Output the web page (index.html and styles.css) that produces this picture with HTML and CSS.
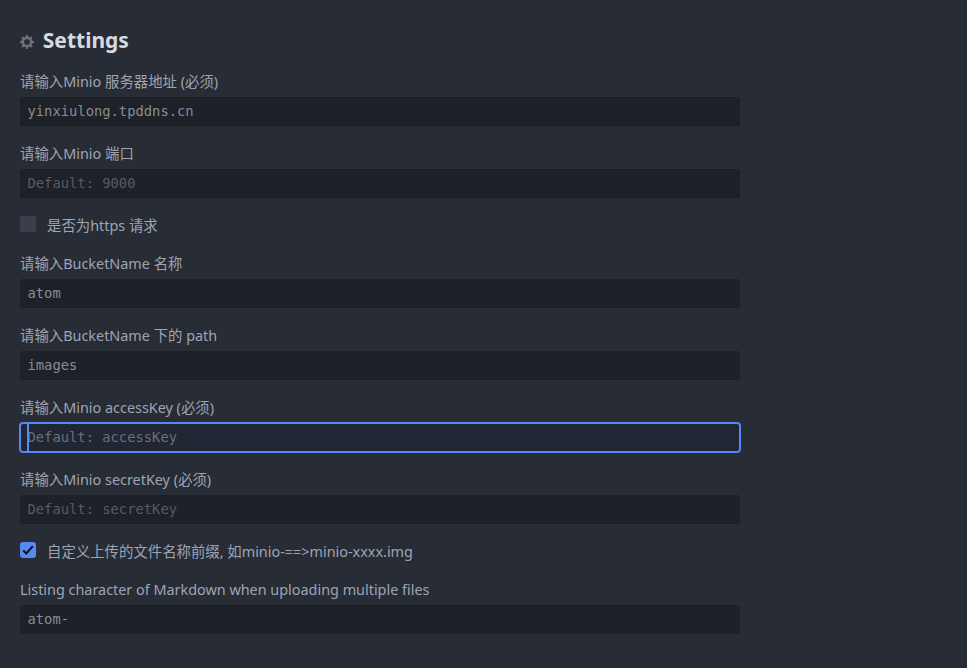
FILE: index.html
```html
<!DOCTYPE html>
<html lang="zh-CN">
<head>
<meta charset="utf-8">
<title>Settings</title>
<link rel="stylesheet" href="styles.css">
</head>
<body>
<main class="panel">
  <h1 class="heading">
    <svg class="gear" viewBox="0 0 14 16" aria-hidden="true"><path fill-rule="evenodd" d="M14 8.77v-1.6l-1.94-.64-.45-1.09.88-1.84-1.13-1.13-1.81.91-1.09-.45-.69-1.92h-1.6l-.63 1.94-1.11.45-1.84-.88-1.13 1.13.91 1.81-.45 1.09L0 7.23v1.59l1.94.64.45 1.09-.88 1.84 1.13 1.13 1.81-.91 1.09.45.69 1.92h1.59l.63-1.94 1.11-.45 1.84.88 1.13-1.13-.92-1.81.47-1.09L14 8.75v.02zM7 11c-1.66 0-3-1.34-3-3s1.34-3 3-3 3 1.34 3 3-1.34 3-3 3z"/></svg>
    <span>Settings</span>
  </h1>
  <div class="group"><div class="label">请输入Minio 服务器地址 (必须)</div><div class="field">yinxiulong.tpddns.cn</div></div>
  <div class="group"><div class="label">请输入Minio 端口</div><div class="field placeholder">Default: 9000</div></div>
  <div class="check"><span class="box"></span><span>是否为https 请求</span></div>
  <div class="group"><div class="label">请输入BucketName 名称</div><div class="field">atom</div></div>
  <div class="group"><div class="label">请输入BucketName 下的 path</div><div class="field">images</div></div>
  <div class="group"><div class="label">请输入Minio accessKey (必须)</div><div class="field placeholder focused">Default: accessKey</div></div>
  <div class="group"><div class="label">请输入Minio secretKey (必须)</div><div class="field placeholder">Default: secretKey</div></div>
  <div class="check"><span class="box checked"><svg viewBox="0 0 16 16" aria-hidden="true"><path d="M3.3 8.5 6.3 11.5 12.8 4.2"/></svg></span><span>自定义上传的文件名称前缀, 如minio-==&gt;minio-xxxx.img</span></div>
  <div class="group"><div class="label">Listing character of Markdown when uploading multiple files</div><div class="field">atom-</div></div>
</main>
</body>
</html>
```
FILE: styles.css
```css
* { box-sizing: border-box; }
body {
  margin: 0;
  background: #282c34;
  color: #9da5b4;
  font: 14.4px/19px "Noto Sans", "Noto Sans CJK SC", sans-serif;
}
.panel {
  height: 668px;
  padding: 26px 20px 0;
  border-bottom: 1px solid #24272f;
  overflow: hidden;
}
.heading {
  display: flex;
  align-items: center;
  height: 28px;
  margin: 0 0 18px;
  color: #d7dae0;
  font-size: 21px;
  font-weight: 700;
  line-height: 28px;
}
.gear {
  width: 14px;
  height: 16px;
  margin: 4px 8.8px 0 0;
  fill: #6b717d;
}
.group {
  width: 720px;
  margin-bottom: 18px;
}
.label {
  height: 25px;
  white-space: nowrap;
}
.field {
  position: relative;
  height: 29px;
  padding: 0 6.5px;
  border: 1px solid #1b1e25;
  border-radius: 3px;
  background: #1e2128;
  color: #888c95;
  font: 13.8px/27px "DejaVu Sans Mono", monospace;
}
.placeholder { color: #575b64; }
.focused {
  border-color: #568af2;
  background: #202633;
  box-shadow: 0 0 0 1px #568af2;
  color: #6b707b;
}
.focused::before {
  content: "";
  position: absolute;
  top: 0;
  bottom: 0;
  left: 6px;
  width: 2px;
  background: #568af2;
}
.check {
  display: flex;
  height: 20px;
  margin-bottom: 18px;
  white-space: nowrap;
}
.box {
  width: 16px;
  height: 16px;
  margin-right: 11px;
  border-radius: 3px;
  background: #3a3f4b;
}
.checked { background: #568af2; }
.box svg {
  display: block;
  fill: none;
  stroke: #0b1220;
  stroke-width: 2;
}
```
